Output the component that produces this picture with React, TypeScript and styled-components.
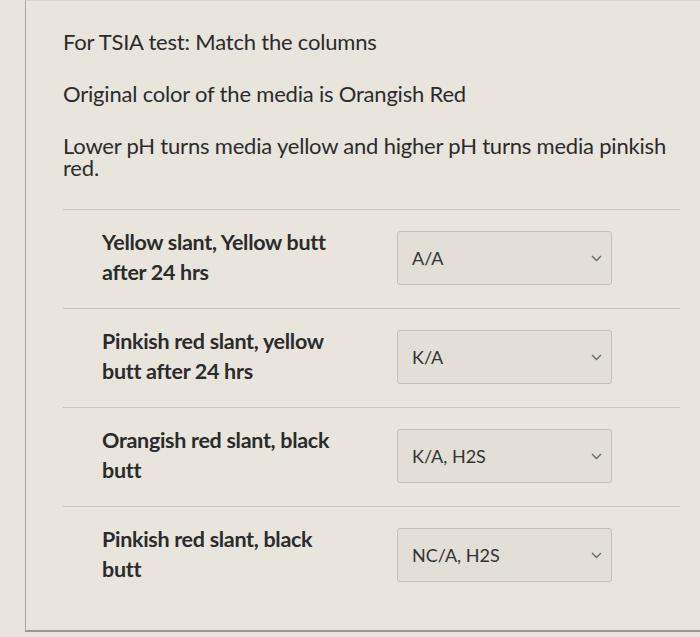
import React from 'react'
import styled, { createGlobalStyle } from 'styled-components'

const GlobalStyle = createGlobalStyle`
  html, body {
    margin: 0;
    padding: 0;
    background: #e9e5dd;
  }
  body {
    font-family: Lato, "Open Sans", "Liberation Sans", sans-serif;
    color: #2b2b2c;
  }
`

const Page = styled.div`
  width: 700px;
  height: 637px;
  overflow: hidden;
`

const Panel = styled.div`
  margin-left: 25px;
  width: 675px;
  height: 632px;
  box-sizing: border-box;
  border-left: 1px solid #a9a59e;
  border-bottom: 2px solid #9c9891;
  border-top: 1px solid #d6d2ca;
  padding: 30px 20px 0 37px;
`

const Para = styled.p`
  margin: 0 0 30px;
  font-size: 22px;
  line-height: 22px;
  letter-spacing: -0.2px;
  max-width: 615px;
`

const Answers = styled.div`
  margin-top: 7px;
  display: flex;
  flex-direction: column;
`

const Row = styled.div`
  display: grid;
  grid-template-columns: 295px 215px;
  align-items: start;
  border-top: 1px solid #c9c5bd;
  padding: 0 0 0 39px;
  height: 99px;
  box-sizing: border-box;
`

const Label = styled.div`
  font-size: 21.5px;
  font-weight: 700;
  line-height: 30px;
  letter-spacing: -0.3px;
  max-width: 240px;
  padding-top: 17px;
`

const SelectBox = styled.div`
  margin-top: 21px;
  height: 54px;
  box-sizing: border-box;
  border: 1px solid #c3bfb7;
  border-radius: 3px;
  background: #e3dfd7;
  display: flex;
  align-items: center;
  justify-content: space-between;
  padding: 0 9px 0 14px;
  font-size: 18px;
  color: #333;
`

const Chevron = () => (
  <svg width="11" height="7" viewBox="0 0 11 7" fill="none">
    <path d="M1 1l4.5 4.5L10 1" stroke="#6b6b6b" strokeWidth="1.4" />
  </svg>
)

const rows = [
  { label: 'Yellow slant, Yellow butt after 24 hrs', value: 'A/A' },
  { label: 'Pinkish red slant, yellow butt after 24 hrs', value: 'K/A' },
  { label: 'Orangish red slant, black butt', value: 'K/A, H2S' },
  { label: 'Pinkish red slant, black butt', value: 'NC/A, H2S' },
]

export default function App() {
  return (
    <Page>
      <GlobalStyle />
      <Panel>
        <Para>For TSIA test: Match the columns</Para>
        <Para>Original color of the media is Orangish Red</Para>
        <Para>Lower pH turns media yellow and higher pH turns media pinkish red.</Para>
        <Answers>
          {rows.map((r) => (
            <Row key={r.label}>
              <Label>{r.label}</Label>
              <SelectBox>
                <span>{r.value}</span>
                <Chevron />
              </SelectBox>
            </Row>
          ))}
        </Answers>
      </Panel>
    </Page>
  )
}
